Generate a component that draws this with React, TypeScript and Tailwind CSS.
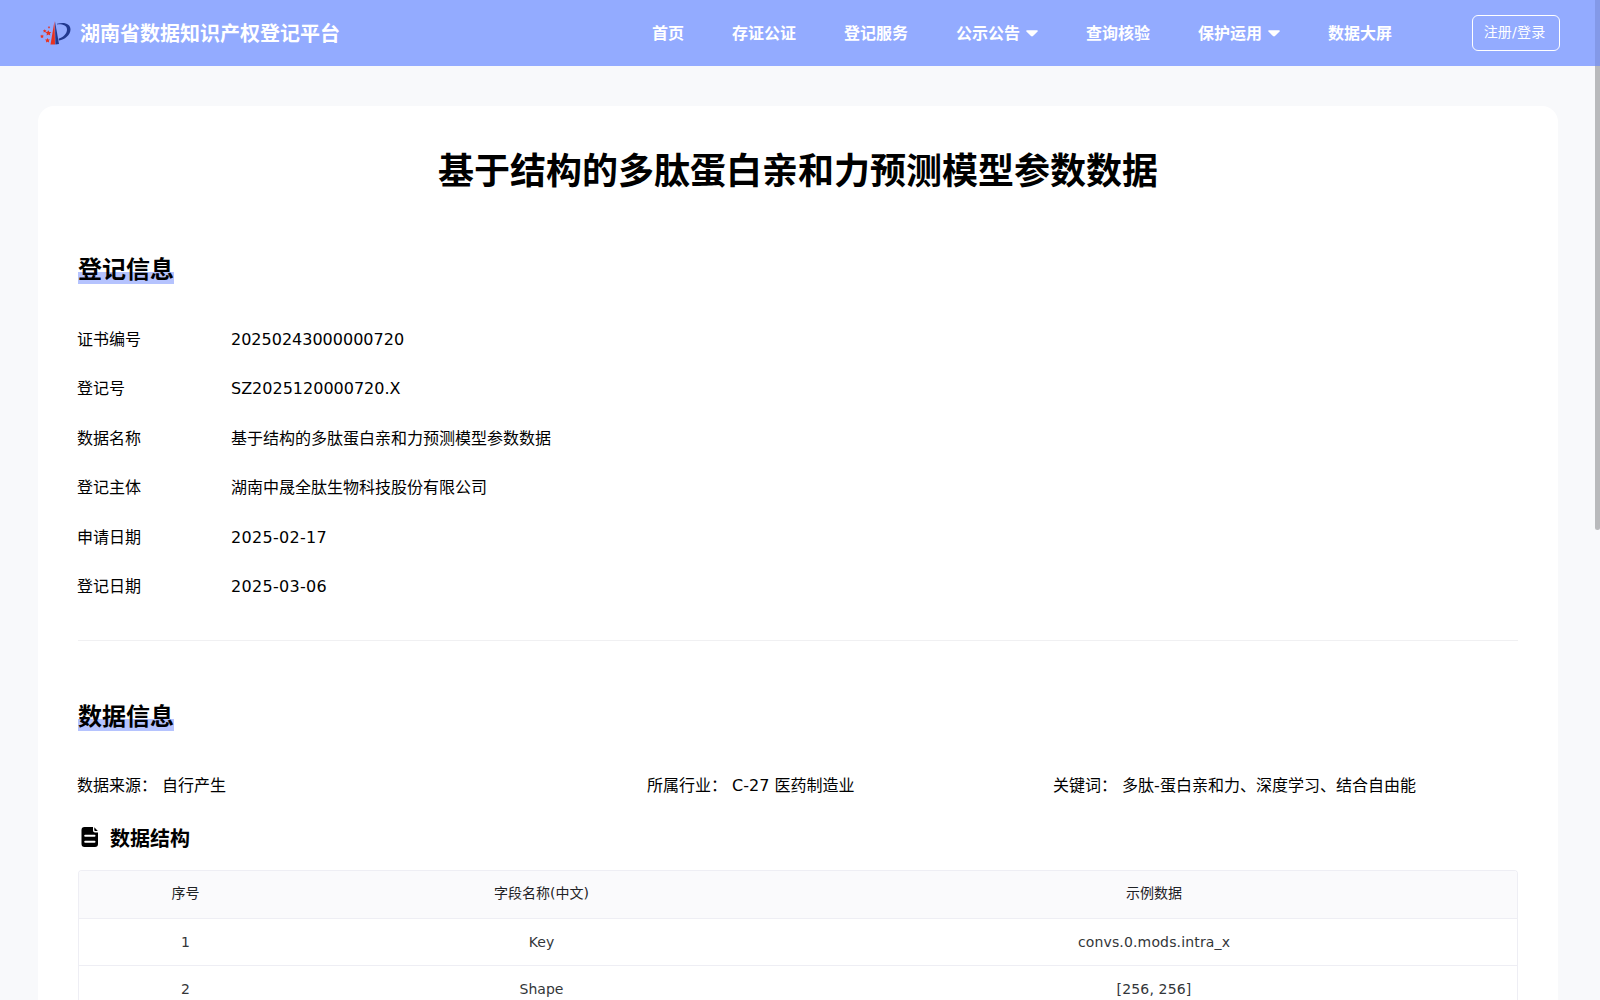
type NavItemT = {
  label: string;
  hasMenu?: boolean;
};

type FieldT = {
  name: string;
  value: string;
};

type StructureRowT = {
  id: number;
  field: string;
  sample: string;
};

const navItems: NavItemT[] = [
  { label: "首页" },
  { label: "存证公证" },
  { label: "登记服务" },
  { label: "公示公告", hasMenu: true },
  { label: "查询核验" },
  { label: "保护运用", hasMenu: true },
  { label: "数据大屏" },
];

const registration: FieldT[] = [
  { name: "证书编号", value: "20250243000000720" },
  { name: "登记号", value: "SZ2025120000720.X" },
  { name: "数据名称", value: "基于结构的多肽蛋白亲和力预测模型参数数据" },
  { name: "登记主体", value: "湖南中晟全肽生物科技股份有限公司" },
];

const dates: FieldT[] = [
  { name: "申请日期", value: "2025-02-17" },
  { name: "登记日期", value: "2025-03-06" },
];

const dataInfo: FieldT[] = [
  { name: "数据来源", value: "自行产生" },
  { name: "所属行业", value: "C-27 医药制造业" },
  { name: "关键词", value: "多肽-蛋白亲和力、深度学习、结合自由能" },
];

const structureRows: StructureRowT[] = [
  { id: 1, field: "Key", sample: "convs.0.mods.intra_x" },
  { id: 2, field: "Shape", sample: "[256, 256]" },
];

export default function App() {
  return (
    <div className="relative h-[1000px] w-full overflow-hidden bg-[#f8f9fb] font-['DejaVu_Sans','Noto_Sans_CJK_SC',sans-serif] text-base text-black">
      <Header />
      <main className="mt-10 ml-[38px] h-[1200px] w-[1520px] rounded-2xl bg-white px-10 pt-[41px]">
        <h1 className="text-center text-4xl leading-[50px] font-bold">
          基于结构的多肽蛋白亲和力预测模型参数数据
        </h1>

        <section className="mt-[54px] border-b border-[#f0f0f2] pb-[28px]">
          <SectionTitle title="登记信息" />
          <dl className="mt-[31px] -ml-px">
            {registration.map((item) => (
              <div key={item.name} className="flex h-[49.5px] items-center">
                <dt className="w-[154px]">{item.name}</dt>
                <dd>{item.value}</dd>
              </div>
            ))}
            {dates.map((item) => (
              <div key={item.name} className="flex h-[49.5px] items-center">
                <dt className="w-[154px]">{item.name}</dt>
                <dd className="tracking-[0.3px]">{item.value}</dd>
              </div>
            ))}
          </dl>
        </section>

        <section className="mt-[57px]">
          <SectionTitle title="数据信息" />
          <div className="mt-[43px] -ml-px grid grid-cols-[570px_406px_1fr] leading-6">
            {dataInfo.map((item) => (
              <p key={item.name} className="whitespace-nowrap">
                {item.name}： {item.value}
              </p>
            ))}
          </div>

          <h3 className="mt-[27px] flex h-7 items-center gap-[10px] text-xl font-bold">
            <FileIcon />
            数据结构
          </h3>
          <StructureTable />
        </section>
      </main>

      {/* scrollbar thumb, fainter where the header covers it */}
      <div className="absolute top-0 right-0 flex h-[530px] w-[5px] flex-col">
        <div className="h-[66px] bg-[#8399e8]" />
        <div className="flex-1 rounded-b-sm bg-[#b9babc]" />
      </div>
    </div>
  );
}

function Header() {
  return (
    <header className="flex h-[66px] items-center bg-[#93abff] pr-10 pl-10 text-white">
      <Logo />
      <span className="ml-[9px] pt-px text-xl font-bold">湖南省数据知识产权登记平台</span>
      <nav className="ml-auto flex gap-12 pt-px">
        {navItems.map((item) => (
          <a key={item.label} className="flex items-center gap-1.5 font-bold">
            {item.label}
            {item.hasMenu && <Caret />}
          </a>
        ))}
      </nav>
      <button className="ml-20 h-9 w-[88px] rounded-md border border-white pr-[3px] pb-[3px] text-sm tracking-[0.2px]">
        注册/登录
      </button>
    </header>
  );
}

function SectionTitle({ title }: { title: string }) {
  return (
    <h2 className="w-max bg-[linear-gradient(#b5c3fe,#b5c3fe)] bg-[length:100%_12px] bg-bottom bg-no-repeat pt-[5px] text-2xl leading-7 font-bold">
      {title}
    </h2>
  );
}

function StructureTable() {
  return (
    <div className="mt-[17px] overflow-hidden rounded-t border border-b-0 border-[#eeeef4] text-center text-sm">
      <div className="grid h-[48px] grid-cols-[213px_499px_1fr] items-center border-b border-[#eeeef4] bg-[#fafafc] pb-1 text-[#1f2225]">
        <span>序号</span>
        <span>字段名称(中文)</span>
        <span>示例数据</span>
      </div>
      {structureRows.map((row) => (
        <div
          key={row.id}
          className="grid h-[47px] grid-cols-[213px_499px_1fr] items-center border-b border-[#eeeef4] text-[#333639]">
          <span>{row.id}</span>
          <span>{row.field}</span>
          <span className="tracking-[0.15px]">{row.sample}</span>
        </div>
      ))}
    </div>
  );
}

function Caret() {
  return (
    <svg width="12" height="7" viewBox="0 0 12 7" fill="currentColor">
      <path d="M1 .3h10c.8 0 1.100.8.6 1.300L7 6c-.6.6-1.400.6-2 0L.4 1.600C-.1 1.100.200.3 1 .3z" />
    </svg>
  );
}

function FileIcon() {
  return (
    <svg width="20" height="20" viewBox="0 0 20 20" className="-mt-1 ml-0.5">
      <path d="M4.500 0H13v3.500c0 1.100.9 2 2 2h3V17a3 3 0 0 1-3 3H4.500a3 3 0 0 1-3-3V3a3 3 0 0 1 3-3z" />
      <path d="M14.300.2 17.800 3.900h-2.600a.9.900 0 0 1-.9-.9z" />
      <path d="M5.200 8.800h9.300M5.200 14.700h9.300" stroke="white" strokeWidth="2" strokeLinecap="round" />
    </svg>
  );
}

function Logo() {
  return (
    <svg width="31" height="24" viewBox="0 0 31 24">
      <path d="M14.500 0 15 23.500H10.500z" fill="#e8321f" />
      <path d="M15 .5 19 23 15.400 23.500z" fill="#22398f" />
      <path
        d="M17 2.800C24 .6 30.500 2.500 30.500 8.500 30.500 14.200 24.500 18.800 19 19.500L18.600 17.800C23.500 16 27 12.700 27 8.500 27 4.300 22.500 3 17 3.400z"
        fill="#22398f"
      />
      <g fill="#e8321f">
        <path d="m8.300 9.200 1 1.700 2 .2-1.400 1.400.4 2-1.900-.9-1.800.9.300-2-1.400-1.400 2-.3z" />
        <path d="m7.500 17 .8 1.400 1.700.2-1.200 1.200.3 1.700-1.600-.8-1.500.8.200-1.700-1.200-1.200 1.700-.2z" />
        <path d="m4.700 8.300.6 1 1.200.2-.9.900.2 1.200-1.100-.6-1.100.6.200-1.200-.9-.9 1.200-.2z" />
        <path d="m2 13.500.6 1.100 1.300.2-.9.9.2 1.300-1.200-.6-1.200.6.200-1.300-.9-.9 1.300-.2z" />
        <path d="m9 5 .4.800.9.100-.7.600.2.900-.8-.4-.8.400.2-.9-.7-.6.900-.1z" />
      </g>
    </svg>
  );
}
